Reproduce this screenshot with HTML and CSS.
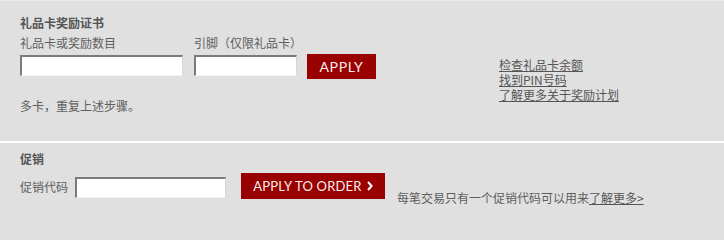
FILE: index.html
```html
<!DOCTYPE html>
<html lang="zh-CN">
<head>
<meta charset="utf-8">
<title>礼品卡奖励证书</title>
<link rel="stylesheet" href="styles.css">
</head>
<body>
<div class="page">
  <section class="gift">
    <div class="gift-main">
      <h2 class="title">礼品卡奖励证书</h2>
      <div class="form-row">
        <label class="field field-wide">
          <span class="field-label">礼品卡或奖励数目</span>
          <input class="text-input" type="text">
        </label>
        <label class="field field-narrow">
          <span class="field-label">引脚（仅限礼品卡）</span>
          <input class="text-input" type="text">
        </label>
        <button class="btn btn-apply" type="button">APPLY</button>
      </div>
      <p class="note">多卡，重复上述步骤。</p>
    </div>
    <ul class="links">
      <li><a href="#">检查礼品卡余额</a></li>
      <li><a href="#">找到PIN号码</a></li>
      <li><a href="#">了解更多关于奖励计划</a></li>
    </ul>
  </section>
  <section class="promo">
    <h2 class="title">促销</h2>
    <div class="promo-row">
      <label class="promo-label" for="promo">促销代码</label>
      <input id="promo" class="text-input promo-input" type="text">
      <button class="btn btn-order" type="button">APPLY TO ORDER<svg class="chev" viewBox="0 0 6 10" width="6" height="10"><path d="M1 1 L4.6 5 L1 9" fill="none" stroke="#fff" stroke-width="2"/></svg></button>
      <p class="promo-note">每笔交易只有一个促销代码可以用来<a href="#">了解更多&gt;</a></p>
    </div>
  </section>
</div>
</body>
</html>
```

FILE: styles.css
```css
html, body {
  margin: 0;
  padding: 0;
  background: #e0e0e0;
}
body {
  font-family: "Noto Sans CJK SC", "Liberation Sans", sans-serif;
  font-size: 12px;
  color: #5e5e5e;
}
.page {
  width: 724px;
  border-top: 1px solid #eaeaea;
}
.gift {
  display: flex;
  height: 140px;
  padding: 0 20px;
  box-sizing: border-box;
}
.gift-main {
  width: 479px;
}
.title {
  margin: 0;
  font-size: 12px;
  line-height: 16px;
  font-weight: bold;
  color: #555;
}
.gift .title {
  margin-top: 14px;
}
.form-row {
  display: flex;
  align-items: flex-end;
  margin-top: 4px;
}
.field {
  display: flex;
  flex-direction: column;
}
.field-wide { width: 163px; margin-right: 11px; }
.field-narrow { width: 103px; margin-right: 10px; }
.field-label {
  line-height: 16px;
  margin-bottom: 4px;
  white-space: nowrap;
}
.text-input {
  box-sizing: border-box;
  height: 21px;
  width: 100%;
  margin: 0;
  padding: 0 3px;
  background: #fff;
  border-top: 2px solid #7b7b7b;
  border-left: 2px solid #7b7b7b;
  border-right: 1px solid #d6d6d6;
  border-bottom: 1px solid #f2f2f2;
  outline: none;
}
.btn {
  box-sizing: border-box;
  margin: 0;
  padding: 0;
  border: 0;
  background: #990000;
  color: #f7eeee;
  font-family: "Lato", "DejaVu Sans", sans-serif;
  display: flex;
  align-items: center;
  justify-content: center;
}
.btn-apply {
  width: 69px;
  height: 25px;
  font-size: 14px;
  letter-spacing: 0.6px;
  margin-bottom: -3px;
}
.note {
  margin: 22px 0 0;
  line-height: 16px;
}
.links {
  list-style: none;
  margin: 56px 0 0;
  padding: 0;
}
.links li {
  line-height: 15px;
}
.links a {
  color: #555;
  text-decoration: underline;
}
.promo {
  border-top: 2px solid #fff;
  padding: 8px 20px 0;
  height: 73px;
  box-sizing: border-box;
}
.promo-row {
  display: flex;
  align-items: flex-start;
  margin-top: 6px;
}
.promo-label {
  line-height: 16px;
  margin-top: 6px;
  width: 55px;
  white-space: nowrap;
}
.promo-input {
  width: 151px;
  margin-top: 4px;
}
.btn-order {
  width: 144px;
  height: 26px;
  margin-left: 15px;
  font-size: 13px;
  letter-spacing: 0.2px;
}
.chev {
  margin-left: 5px;
}
.promo-note {
  margin: 17px 0 0 12px;
  line-height: 16px;
  white-space: nowrap;
}
.promo-note a {
  color: #555;
  text-decoration: underline;
}
```
